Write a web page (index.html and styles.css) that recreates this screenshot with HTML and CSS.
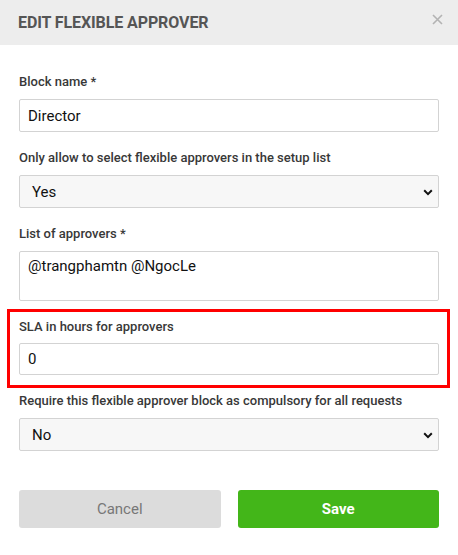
FILE: index.html
```html
<!DOCTYPE html>
<html>
<head>
<meta charset="utf-8">
<link rel="stylesheet" href="styles.css">
</head>
<body>
<div class="modal">
  <div class="modal-header">
    <h1 class="modal-title">EDIT FLEXIBLE APPROVER</h1>
    <span class="close">
      <svg width="11" height="11" viewBox="0 0 11 11"><path d="M1 1L10 10M10 1L1 10" stroke="#b3b3b3" stroke-width="1.6" fill="none"/></svg>
    </span>
  </div>
  <div class="modal-body">
    <div class="field">
      <label class="label">Block name *</label>
      <div class="control">Director</div>
    </div>
    <div class="field">
      <label class="label">Only allow to select flexible approvers in the setup list</label>
      <div class="control select">Yes
        <svg class="chev" width="10" height="7" viewBox="0 0 10 7"><path d="M1.2 1.3L5 5.1L8.8 1.3" stroke="#111" stroke-width="2" fill="none"/></svg>
      </div>
    </div>
    <div class="field">
      <label class="label">List of approvers *</label>
      <div class="control textarea">@trangphamtn @NgocLe</div>
    </div>
    <div class="field highlighted">
      <label class="label">SLA in hours for approvers</label>
      <div class="control">0</div>
    </div>
    <div class="field">
      <label class="label">Require this flexible approver block as compulsory for all requests</label>
      <div class="control select">No
        <svg class="chev" width="10" height="7" viewBox="0 0 10 7"><path d="M1.2 1.3L5 5.1L8.8 1.3" stroke="#111" stroke-width="2" fill="none"/></svg>
      </div>
    </div>
    <div class="actions">
      <button class="btn btn-cancel">Cancel</button>
      <button class="btn btn-save">Save</button>
    </div>
  </div>
</div>
</body>
</html>
```
FILE: styles.css
```css
* { box-sizing: border-box; }
html, body { margin: 0; padding: 0; background: #fff; }
body { font-family: Roboto, "Liberation Sans", sans-serif; width: 458px; height: 555px; overflow: hidden; }
.modal { width: 458px; }
.modal-header {
  height: 45px;
  background: #ededed;
  display: flex;
  align-items: center;
  justify-content: space-between;
  padding: 0 15px 0 18px;
}
.modal-title {
  margin: 0;
  font-size: 16px;
  font-weight: 700;
  color: #555;
  letter-spacing: -0.1px;
}
.close { display: flex; align-items: center; margin-top: -7px; }
.modal-body { padding: 29px 19px 0 19px; }
.field { margin-bottom: 18px; position: relative; }
.label {
  display: block;
  font-size: 13px;
  font-weight: 500;
  line-height: 16px;
  color: #383838;
  margin-bottom: 9px;
}
.control {
  height: 33px;
  border: 1px solid #d3d3d3;
  border-radius: 2px;
  padding: 0 8px;
  display: flex;
  align-items: center;
  font-size: 15px;
  color: #111;
  background: #fff;
  position: relative;
}
.select { background: #f7f7f7; padding-left: 12px; }
.chev { position: absolute; right: 5px; top: 13px; }
.textarea { height: 50px; align-items: flex-start; padding-top: 5px; }
.highlighted .label { margin-bottom: 8px; }
.highlighted .control { height: 32px; }
.highlighted::after {
  content: "";
  position: absolute;
  left: -12px; right: -11px; top: -10px; bottom: -13px;
  border: 3px solid #ff0000;
  pointer-events: none;
}
.actions { display: flex; gap: 17px; margin-top: 39px; }
.btn {
  flex: 1;
  height: 38px;
  border: none;
  border-radius: 3px;
  font-family: Roboto, "Liberation Sans", sans-serif;
  font-size: 15px;
}
.btn-cancel { background: #dcdcdc; color: #777; }
.btn-save { background: #43b619; color: #fff; font-weight: 700; }
```
